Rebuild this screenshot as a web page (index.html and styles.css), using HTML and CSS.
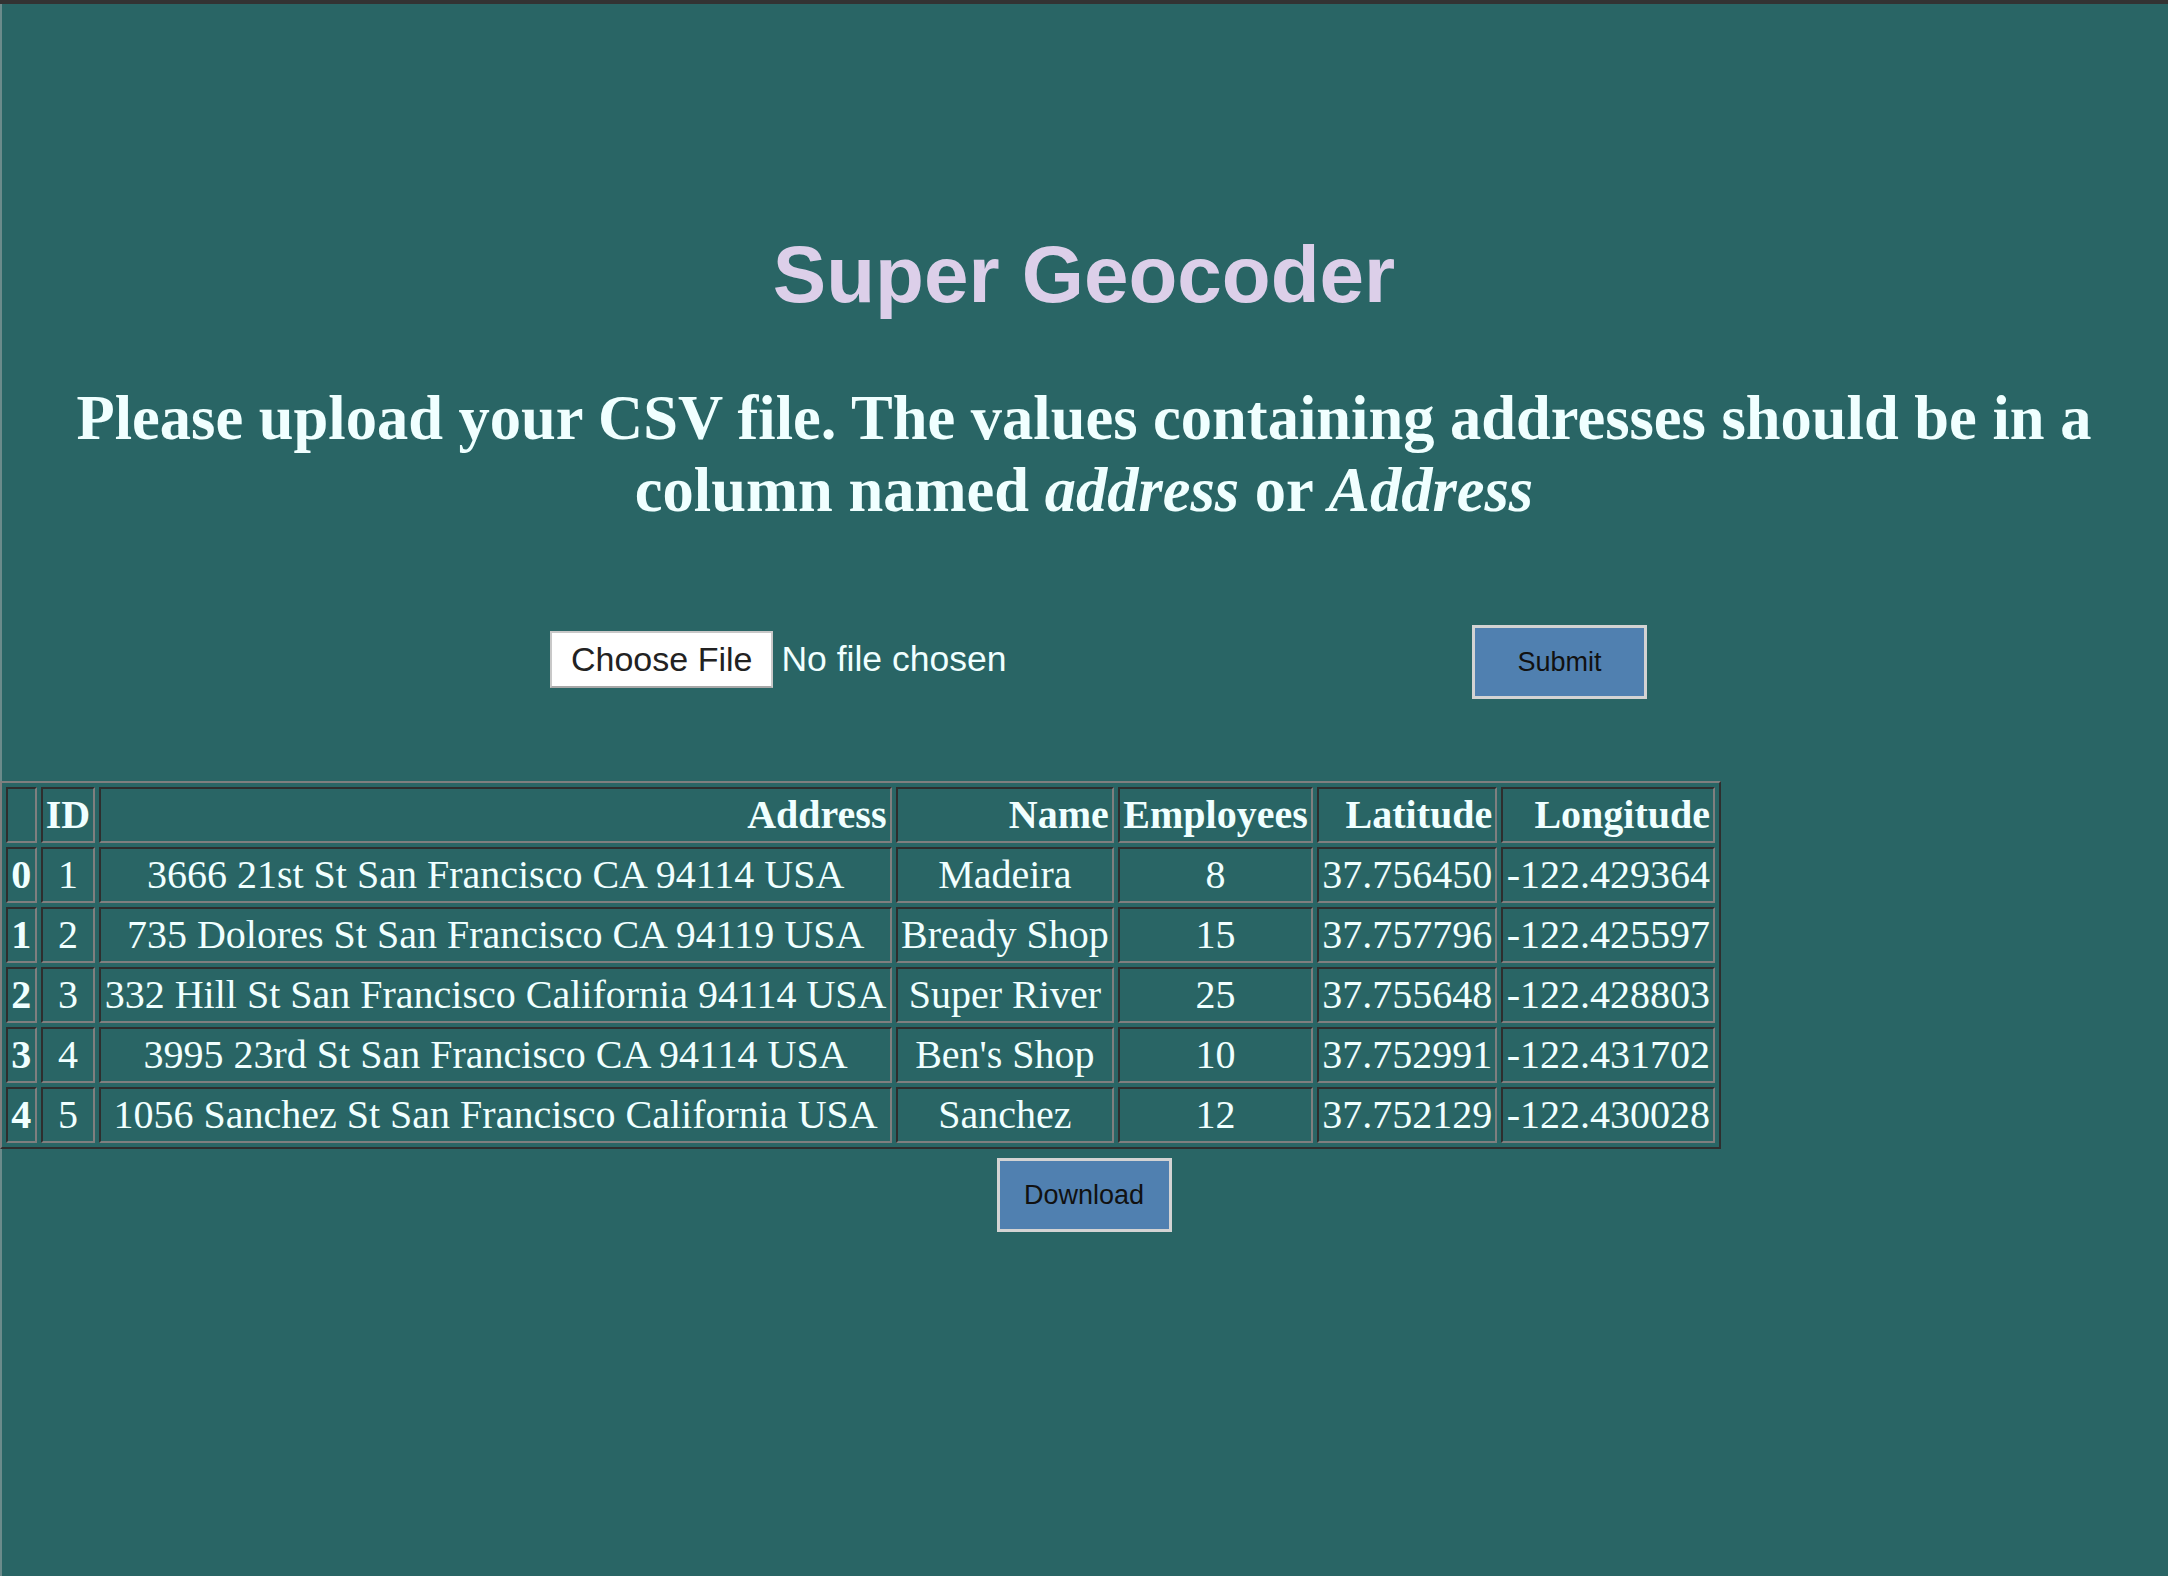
FILE: index.html
```html
<!DOCTYPE html>
<html lang="en">
<head>
<meta charset="utf-8">
<title>Super Geocoder</title>
<link rel="stylesheet" href="styles.css">
</head>
<body>
  <h1 class="title">Super Geocoder</h1>
  <h2 class="lead">Please upload your CSV file. The values containing addresses should be in a column named <i>address</i> or <i>Address</i></h2>
  <form class="upload">
    <input class="file" type="file" name="file">
    <button class="btn" type="button">Submit</button>
  </form>
  <table class="dataframe">
    <thead>
      <tr>
        <th></th><th>ID</th><th>Address</th><th>Name</th><th>Employees</th><th>Latitude</th><th>Longitude</th>
      </tr>
    </thead>
    <tbody>
      <tr><th>0</th><td>1</td><td>3666 21st St San Francisco CA 94114 USA</td><td>Madeira</td><td>8</td><td>37.756450</td><td>-122.429364</td></tr>
      <tr><th>1</th><td>2</td><td>735 Dolores St San Francisco CA 94119 USA</td><td>Bready Shop</td><td>15</td><td>37.757796</td><td>-122.425597</td></tr>
      <tr><th>2</th><td>3</td><td>332 Hill St San Francisco California 94114 USA</td><td>Super River</td><td>25</td><td>37.755648</td><td>-122.428803</td></tr>
      <tr><th>3</th><td>4</td><td>3995 23rd St San Francisco CA 94114 USA</td><td>Ben's Shop</td><td>10</td><td>37.752991</td><td>-122.431702</td></tr>
      <tr><th>4</th><td>5</td><td>1056 Sanchez St San Francisco California USA</td><td>Sanchez</td><td>12</td><td>37.752129</td><td>-122.430028</td></tr>
    </tbody>
  </table>
  <div class="download">
    <button class="btn" type="button">Download</button>
  </div>
</body>
</html>
```
FILE: styles.css
```css
html {
  background: #296565;
}
body {
  margin: 0;
  min-height: 100vh;
  box-sizing: border-box;
  border-top: 4px solid #333333;
  box-shadow: inset 2px 0 0 #6b8b8b;
  background: #296565;
  color: #f0ffff;
  font-family: "Liberation Serif", "Times New Roman", serif;
  overflow: hidden;
}
.title {
  margin: 225px 0 0;
  font-family: "Liberation Sans", Arial, Helvetica, sans-serif;
  font-size: 80px;
  line-height: 92px;
  font-weight: bold;
  text-align: center;
  color: #dccfe9;
}
.lead {
  margin: 61px 0 0;
  padding: 0 20px;
  font-size: 62.5px;
  line-height: 72px;
  font-weight: bold;
  text-align: center;
  color: #f0ffff;
}
.upload {
  margin: 99px 0 0;
  padding-left: 29px;
  display: flex;
  justify-content: center;
  align-items: baseline;
  gap: 22px;
}
.file {
  width: 900px;
  font-family: "Liberation Sans", Arial, Helvetica, sans-serif;
  font-size: 35.5px;
  color: #f0ffff;
}
.file::file-selector-button {
  font-family: "Liberation Sans", Arial, Helvetica, sans-serif;
  font-size: 34px;
  line-height: 41px;
  padding: 6px 19px;
  margin-right: 8px;
  background: #ffffff;
  color: #222222;
  border: 2px solid #c8c8c8;
  border-bottom-color: #a8a8a8;
  border-radius: 0;
}
.btn {
  box-sizing: border-box;
  width: 175px;
  font-family: "Liberation Sans", Arial, Helvetica, sans-serif;
  font-size: 27px;
  line-height: 31px;
  padding: 19px 10px 18px;
  text-align: center;
  background: #5080b0;
  color: #111111;
  border: 3px solid #d3d3d3;
  border-radius: 0;
}
.dataframe {
  margin: 82px 0 0;
  border-collapse: separate;
  border-spacing: 4px;
  border: 2px solid;
  border-color: #7f7f7f #2e2e2e #2e2e2e #7f7f7f;
  font-size: 40px;
  line-height: 46px;
  color: #f0ffff;
}
.dataframe th,
.dataframe td {
  padding: 3px 3.25px;
  border: 2px solid;
  border-color: #2e2e2e #7f7f7f #7f7f7f #2e2e2e;
  white-space: nowrap;
}
.dataframe thead tr {
  text-align: right;
}
.dataframe td {
  text-align: center;
}
.dataframe tbody th {
  text-align: center;
}
.download {
  margin-top: 9px;
  display: flex;
  justify-content: center;
}
```
